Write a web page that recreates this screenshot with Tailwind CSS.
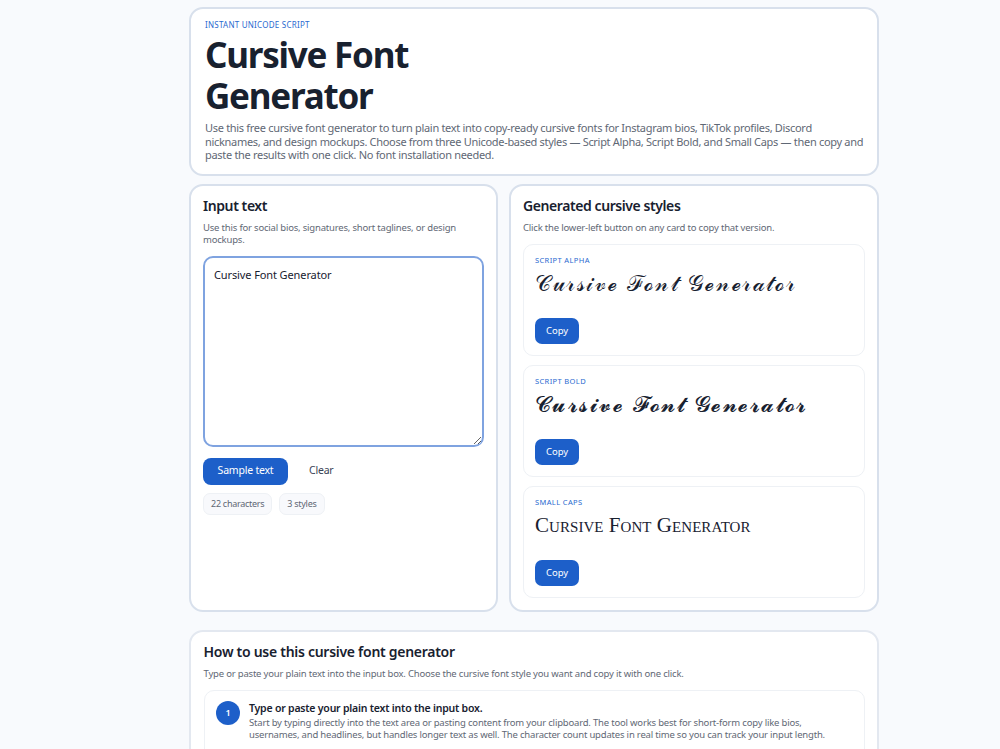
<!DOCTYPE html>
<html lang="en">
<head>
    <meta charset="UTF-8">
    <meta name="viewport" content="width=device-width, initial-scale=1.0">
    <title>Cursive Font Generator</title>
    <script src="https://cdn.jsdelivr.net/npm/@tailwindcss/browser@4"></script>
</head>
<body class="bg-[#f8fafd] h-[749px] overflow-hidden font-['Noto_Sans',sans-serif] text-[#18212f]">
    <main class="w-[690px] ml-[189px] pt-[7px] flex flex-col">
        <!-- hero -->
        <section class="h-[169px] bg-white border-2 border-[#d8e0ec] rounded-[14px] pl-[14px] pr-[12.5px] pt-[9.5px]">
            <p class="text-[8px] leading-[12px] tracking-[0.03em] uppercase text-[#2a6ad0]">Instant Unicode Script</p>
            <h1 class="text-[35px] leading-[41px] font-bold tracking-[-0.035em] mt-[3px] w-[300px]">Cursive Font Generator</h1>
            <p class="text-[11px] leading-[13.5px] tracking-[-0.028em] text-[#5f6875] mt-[5.5px]">Use this free cursive font generator to turn plain text into copy-ready cursive fonts for Instagram bios, TikTok profiles, Discord nicknames, and design mockups. Choose from three Unicode-based styles — Script Alpha, Script Bold, and Small Caps — then copy and paste the results with one click. No font installation needed.</p>
        </section>

        <div class="flex gap-[11px] mt-[8px] h-[428px]">
            <!-- input -->
            <section class="w-[309px] bg-white border-2 border-[#d8e0ec] rounded-[14px] px-[12px] pt-[9.5px]">
                <h2 class="text-[14px] leading-[20px] font-semibold tracking-[-0.03em]">Input text</h2>
                <p class="text-[9.5px] leading-[12px] tracking-[-0.02em] text-[#5f6875] mt-[6px]">Use this for social bios, signatures, short taglines, or design mockups.</p>
                <textarea class="block w-full h-[191px] mt-[10px] px-[9px] py-[9px] text-[11px] leading-[16px] tracking-[-0.01em] text-[#18212f] border-2 border-[#7fa3e0] rounded-[10px] outline-none">Cursive Font Generator</textarea>
                <div class="flex items-center mt-[11px]">
                    <button class="w-[85px] h-[27px] bg-[#1d5fc9] text-white text-[10.5px] tracking-[-0.02em] rounded-[8px]">Sample text</button>
                    <button class="ml-[21px] text-[10.5px] tracking-[-0.02em] text-[#3a4456]">Clear</button>
                </div>
                <div class="flex gap-[7px] mt-[8px]">
                    <span class="h-[22px] px-[7px] flex items-center bg-[#f8f9fc] border border-[#eef1f5] rounded-[7px] text-[9px] tracking-[-0.03em] text-[#5f6875]">22 characters</span>
                    <span class="h-[22px] px-[7px] flex items-center bg-[#f8f9fc] border border-[#eef1f5] rounded-[7px] text-[9px] tracking-[-0.03em] text-[#5f6875]">3 styles</span>
                </div>
            </section>

            <!-- outputs -->
            <section class="w-[370px] bg-white border-2 border-[#d8e0ec] rounded-[14px] px-[12px] pt-[9.5px]">
                <h2 class="text-[14px] leading-[20px] font-semibold tracking-[-0.03em]">Generated cursive styles</h2>
                <p class="text-[9.5px] leading-[12px] tracking-[-0.02em] text-[#5f6875] mt-[6px]">Click the lower-left button on any card to copy that version.</p>
                <div class="flex flex-col gap-[9px] mt-[10.5px]">
                    <article class="h-[112px] border border-[#eef1f5] rounded-[10px] px-[11px] pt-[9.5px]">
                        <p class="text-[7.5px] leading-[11px] tracking-[0.05em] uppercase text-[#2a6ad0]">Script Alpha</p>
                        <p class="h-[40px] mt-[4px] text-[22px] leading-[28px] tracking-[1.6px] text-[#18212f] font-['DejaVu_Serif',serif] whitespace-nowrap">𝒞𝓊𝓇𝓈𝒾𝓋ℯ ℱℴ𝓃𝓉 𝒢ℯ𝓃ℯ𝓇𝒶𝓉ℴ𝓇</p>
                        <button class="w-[44px] h-[26px] mt-[8.5px] bg-[#1d5fc9] text-white text-[9.5px] rounded-[7px]">Copy</button>
                    </article>
                    <article class="h-[112px] border border-[#eef1f5] rounded-[10px] px-[11px] pt-[9.5px]">
                        <p class="text-[7.5px] leading-[11px] tracking-[0.05em] uppercase text-[#2a6ad0]">Script Bold</p>
                        <p class="h-[40px] mt-[4px] text-[22px] leading-[28px] tracking-[1.45px] text-[#18212f] font-['DejaVu_Serif',serif] whitespace-nowrap">𝓒𝓾𝓻𝓼𝓲𝓿𝓮 𝓕𝓸𝓷𝓽 𝓖𝓮𝓷𝓮𝓻𝓪𝓽𝓸𝓻</p>
                        <button class="w-[44px] h-[26px] mt-[8.5px] bg-[#1d5fc9] text-white text-[9.5px] rounded-[7px]">Copy</button>
                    </article>
                    <article class="h-[112px] border border-[#eef1f5] rounded-[10px] px-[11px] pt-[9.5px]">
                        <p class="text-[7.5px] leading-[11px] tracking-[0.05em] uppercase text-[#2a6ad0]">Small Caps</p>
                        <p class="h-[40px] mt-[3px] text-[21px] leading-[28px] tracking-[0.05px] text-[#18212f] font-['Liberation_Serif',serif] [font-variant:small-caps] whitespace-nowrap">Cursive Font Generator</p>
                        <button class="w-[44px] h-[26px] mt-[9.5px] bg-[#1d5fc9] text-white text-[9.5px] rounded-[7px]">Copy</button>
                    </article>
                </div>
            </section>
        </div>

        <!-- how to -->
        <section class="mt-[18px] h-[200px] bg-white border-2 border-[#e3e8f0] rounded-[14px] px-[12.5px] pt-[10px]">
            <h2 class="text-[14px] leading-[20px] font-semibold tracking-[-0.02em]">How to use this cursive font generator</h2>
            <p class="text-[9.5px] leading-[12px] tracking-[-0.02em] text-[#5f6875] mt-[6px]">Type or paste your plain text into the input box. Choose the cursive font style you want and copy it with one click.</p>
            <div class="flex gap-[9px] mt-[10px] h-[90px] border border-[#eef1f5] rounded-[10px] px-[11.5px] pt-[10px]">
                <span class="shrink-0 w-[24px] h-[24px] rounded-full bg-[#1d5fc9] text-white text-[9px] font-semibold flex items-center justify-center">1</span>
                <div>
                    <h3 class="text-[10.5px] leading-[14px] font-semibold tracking-[-0.02em]">Type or paste your plain text into the input box.</h3>
                    <p class="text-[9.5px] leading-[12px] tracking-[-0.02em] text-[#5f6875] mt-[2px]">Start by typing directly into the text area or pasting content from your clipboard. The tool works best for short-form copy like bios, usernames, and headlines, but handles longer text as well. The character count updates in real time so you can track your input length.</p>
                </div>
            </div>
        </section>
    </main>
</body>
</html>
